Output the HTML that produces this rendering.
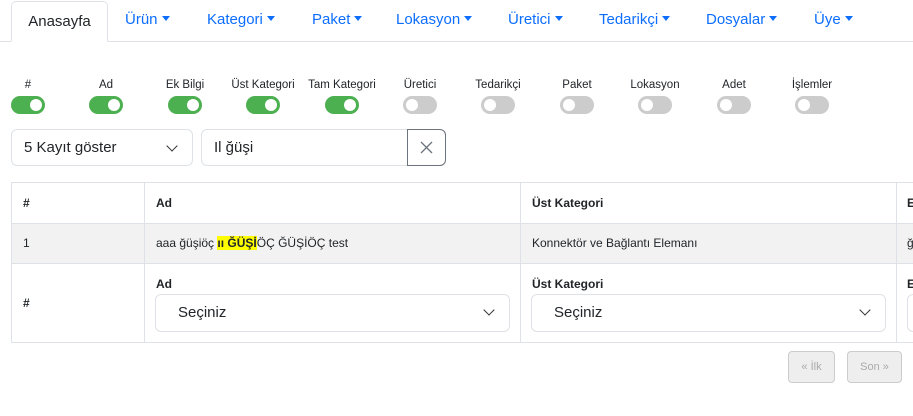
<!DOCTYPE html>
<html><head><meta charset="utf-8"><style>
*{box-sizing:border-box;margin:0;padding:0}
body{width:913px;height:416px;overflow:hidden;background:#fff;font-family:"Liberation Sans",sans-serif;color:#212529;position:relative}
.a{position:absolute}
.nav{left:0;top:41px;width:913px;border-top:1px solid #dee2e6}
.tab{left:11px;top:1px;width:97px;height:41px;border:1px solid #dee2e6;border-bottom:1px solid #fff;border-radius:5px 5px 0 0;background:#fff;font-size:15px;line-height:40px;text-align:center}
.ni{top:11px;font-size:15px;color:#0d6efd}
.ni:after{content:"";display:inline-block;margin-left:4px;border-left:4px solid transparent;border-right:4px solid transparent;border-top:5px solid #0d6efd;vertical-align:3px}
.lb{top:79px;font-size:11.5px;width:80px;text-align:center}
.tg{top:96px;width:34px;height:18px;border-radius:9px;background:#4caf50}
.tg:after{content:"";position:absolute;right:3px;top:3px;width:12px;height:12px;border-radius:50%;background:#fff}
.tg.off{background:#ccc}.tg.off:after{left:3px;right:auto}
.box{border:1px solid #dee2e6;border-radius:6px;background:#fff}
.chev{width:8px;height:8px;border-right:1.5px solid #333;border-bottom:1.5px solid #333;transform:rotate(45deg)}
.v{width:1px;background:#dee2e6}
.h{height:1px;background:#dee2e6}
.t{font-size:12px}
.b{font-weight:bold;font-size:12px}
.pg{top:351px;height:32px;border:1px solid #ccc;border-radius:4px;background:#eee;color:#aaa;font-size:11px;line-height:30px;text-align:center}
</style></head><body>
<div class="a nav"></div>
<div class="a tab">Anasayfa</div>
<div class="a ni" style="left:125px">Ürün</div>
<div class="a ni" style="left:207px">Kategori</div>
<div class="a ni" style="left:312px">Paket</div>
<div class="a ni" style="left:396px">Lokasyon</div>
<div class="a ni" style="left:508px">Üretici</div>
<div class="a ni" style="left:599px">Tedarikçi</div>
<div class="a ni" style="left:706px">Dosyalar</div>
<div class="a ni" style="left:814px">Üye</div>

<div class="a lb" style="left:-12px">#</div><div class="a tg" style="left:11px"></div>
<div class="a lb" style="left:66px">Ad</div><div class="a tg" style="left:89px"></div>
<div class="a lb" style="left:145px">Ek Bilgi</div><div class="a tg" style="left:168px"></div>
<div class="a lb" style="left:223px">Üst Kategori</div><div class="a tg" style="left:246px"></div>
<div class="a lb" style="left:302px">Tam Kategori</div><div class="a tg" style="left:325px"></div>
<div class="a lb" style="left:380px">Üretici</div><div class="a tg off" style="left:403px"></div>
<div class="a lb" style="left:458px">Tedarikçi</div><div class="a tg off" style="left:481px"></div>
<div class="a lb" style="left:537px">Paket</div><div class="a tg off" style="left:560px"></div>
<div class="a lb" style="left:615px">Lokasyon</div><div class="a tg off" style="left:638px"></div>
<div class="a lb" style="left:694px">Adet</div><div class="a tg off" style="left:717px"></div>
<div class="a lb" style="left:772px">İşlemler</div><div class="a tg off" style="left:795px"></div>

<div class="a box" style="left:11px;top:129px;width:182px;height:37px"></div>
<div class="a" style="left:24px;top:139px;font-size:15px">5 Kayıt göster</div>
<div class="a chev" style="left:168px;top:142px"></div>
<div class="a box" style="left:201px;top:129px;width:245px;height:37px"></div>
<div class="a" style="left:214px;top:139px;font-size:15px">Il ğüşi</div>
<div class="a" style="left:407px;top:129px;width:39px;height:37px;border:1px solid #6c757d;border-radius:0 6px 6px 0"><svg width="37" height="35" style="position:absolute;left:0;top:0"><path d="M13 12l11 11M24 12l-11 11" stroke="#6c757d" stroke-width="1.3" fill="none"/></svg></div>

<div class="a" style="left:11px;top:223px;width:902px;height:40px;background:#f2f2f2"></div>
<div class="a h" style="left:11px;top:182px;width:902px"></div>
<div class="a h" style="left:11px;top:223px;width:902px"></div>
<div class="a h" style="left:11px;top:263px;width:902px"></div>
<div class="a h" style="left:11px;top:342px;width:902px"></div>
<div class="a v" style="left:11px;top:182px;height:161px"></div>
<div class="a v" style="left:144px;top:182px;height:161px"></div>
<div class="a v" style="left:520px;top:182px;height:161px"></div>
<div class="a v" style="left:896px;top:182px;height:161px"></div>

<div class="a b" style="left:23px;top:196px">#</div>
<div class="a b" style="left:156px;top:196px">Ad</div>
<div class="a b" style="left:532px;top:196px">Üst Kategori</div>
<div class="a b" style="left:907px;top:196px">E</div>
<div class="a t" style="left:23px;top:236px">1</div>
<div class="a t" style="left:156px;top:236px">aaa ğüşiöç <b style="background:#ff0">ıı ĞÜŞİ</b>ÖÇ ĞÜŞİÖÇ test</div>
<div class="a t" style="left:532px;top:236px">Konnektör ve Bağlantı Elemanı</div>
<div class="a t" style="left:907px;top:236px">ğ</div>
<div class="a b" style="left:23px;top:296px">#</div>
<div class="a b" style="left:156px;top:277px">Ad</div>
<div class="a b" style="left:532px;top:277px">Üst Kategori</div>
<div class="a b" style="left:907px;top:277px">E</div>
<div class="a box" style="left:155px;top:294px;width:355px;height:38px"></div>
<div class="a" style="left:178px;top:304px;font-size:15px">Seçiniz</div>
<div class="a chev" style="left:485px;top:306px"></div>
<div class="a box" style="left:531px;top:294px;width:355px;height:38px"></div>
<div class="a" style="left:554px;top:304px;font-size:15px">Seçiniz</div>
<div class="a chev" style="left:861px;top:306px"></div>
<div class="a box" style="left:907px;top:294px;width:30px;height:38px"></div>

<div class="a pg" style="left:788px;width:47px">« İlk</div>
<div class="a pg" style="left:847px;width:55px">Son »</div>
</body></html>
